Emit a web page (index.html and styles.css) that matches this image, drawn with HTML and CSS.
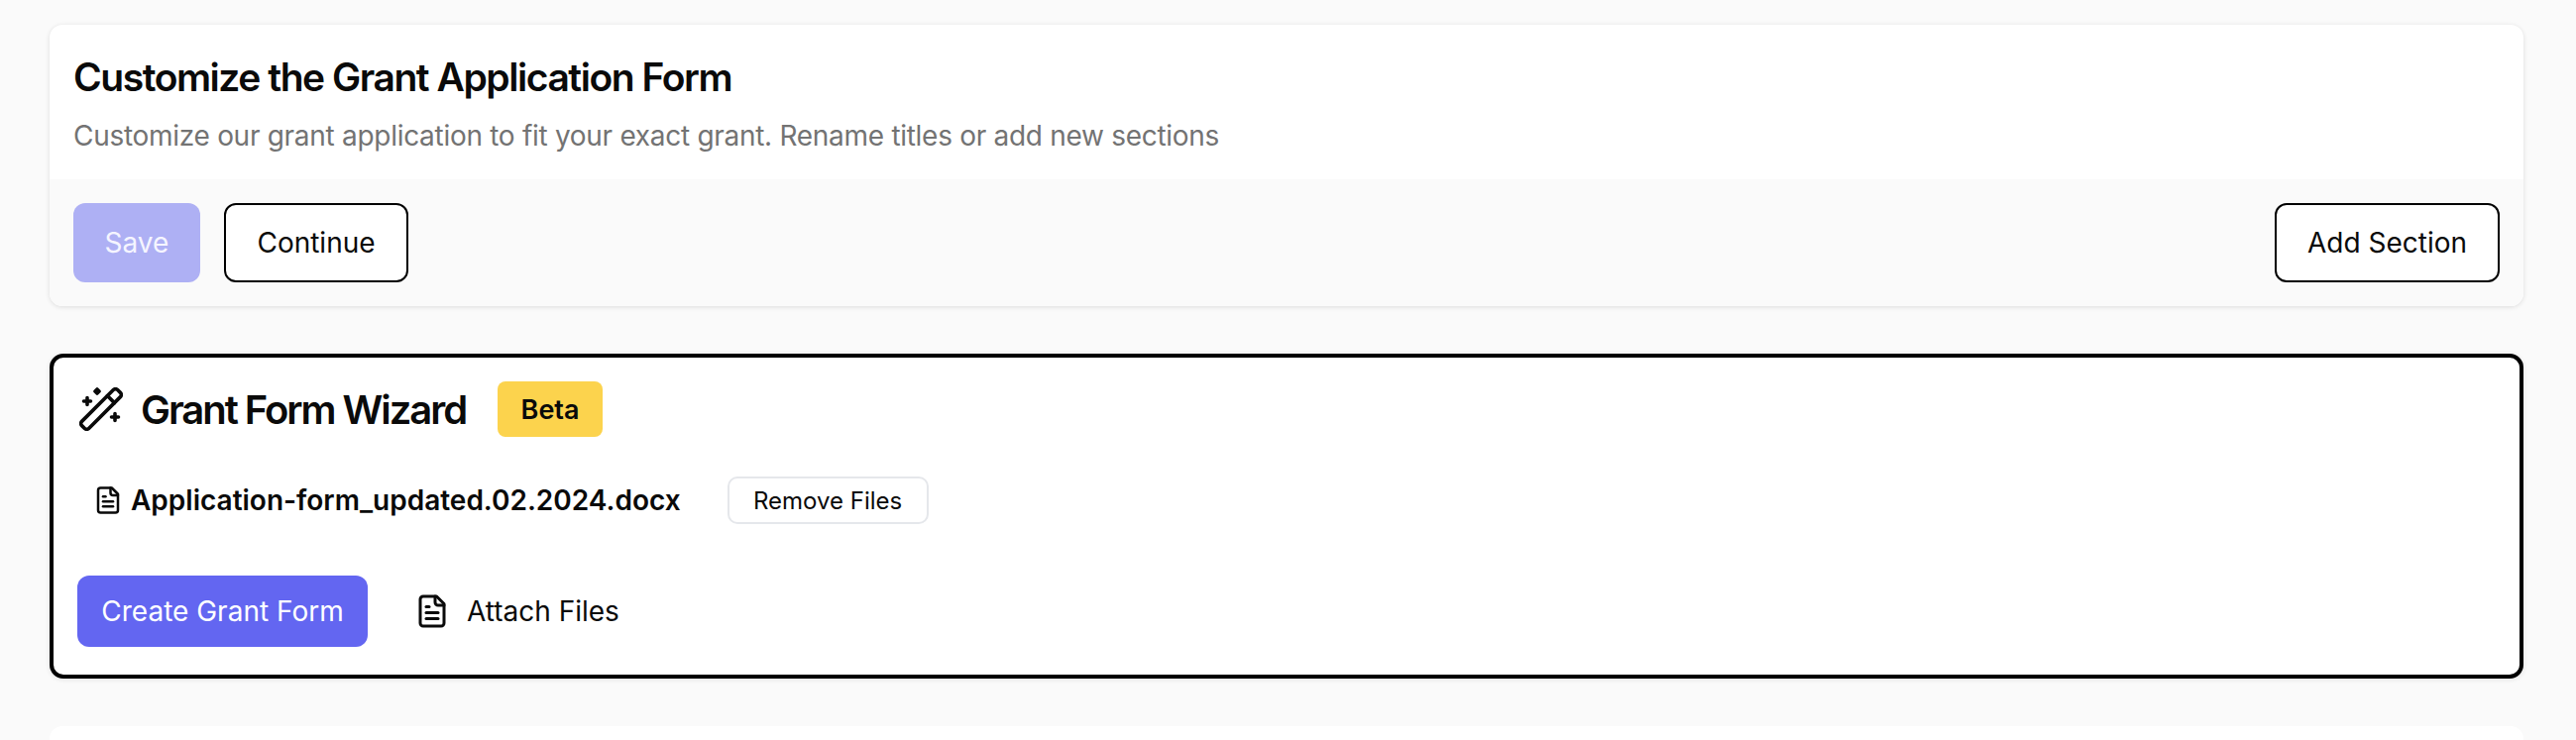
FILE: index.html
```html
<!DOCTYPE html>
<html lang="en">
<head>
    <meta charset="UTF-8">
    <meta name="viewport" content="width=device-width, initial-scale=1.0">
    <title>Customize the Grant Application Form</title>
    <link rel="stylesheet" href="styles.css">
</head>
<body>
    <section class="card">
        <div class="card-head">
            <h1 class="card-title">Customize the Grant Application Form</h1>
            <p class="card-text">Customize our grant application to fit your exact grant. Rename titles or add new sections</p>
        </div>
        <div class="card-foot">
            <div class="foot-left">
                <button class="btn btn-save">Save</button>
                <button class="btn btn-outline btn-continue">Continue</button>
            </div>
            <button class="btn btn-outline btn-add">Add Section</button>
        </div>
    </section>

    <section class="wizard">
        <div class="wizard-head">
            <svg class="wand-icon" viewBox="0 0 44 44" fill="none" stroke="currentColor" stroke-width="3.6" stroke-linecap="round" stroke-linejoin="round">
                <g transform="rotate(-45 22 22)">
                    <rect x="-3.5" y="17" width="51" height="10" rx="3"/>
                    <line x1="36" y1="17" x2="36" y2="27"/>
                </g>
                <path d="M8 10.5v7M4.5 14h7"/>
                <path d="M18 2l2 2-2 2-2-2z" fill="currentColor"/>
                <path d="M36 26.5v7M32.5 30h7"/>
            </svg>
            <h2 class="wizard-title">Grant Form Wizard</h2>
            <span class="badge">Beta</span>
        </div>
        <div class="file-row">
            <svg class="file-icon file-icon-sm" viewBox="0 0 24 24" fill="none" stroke="currentColor" stroke-width="2" stroke-linecap="round" stroke-linejoin="round">
                <path d="M15 2H6a2 2 0 0 0-2 2v16a2 2 0 0 0 2 2h12a2 2 0 0 0 2-2V7Z"/>
                <path d="M14 2v4a2 2 0 0 0 2 2h4"/>
                <path d="M10 9H8"/>
                <path d="M16 13H8"/>
                <path d="M16 17H8"/>
            </svg>
            <span class="file-name">Application-form_updated.02.2024.docx</span>
            <button class="btn-remove">Remove Files</button>
        </div>
        <div class="wizard-actions">
            <button class="btn-create">Create Grant Form</button>
            <button class="btn-attach">
                <svg class="file-icon" viewBox="0 0 24 24" fill="none" stroke="currentColor" stroke-width="2" stroke-linecap="round" stroke-linejoin="round">
                    <path d="M15 2H6a2 2 0 0 0-2 2v16a2 2 0 0 0 2 2h12a2 2 0 0 0 2-2V7Z"/>
                    <path d="M14 2v4a2 2 0 0 0 2 2h4"/>
                    <path d="M10 9H8"/>
                    <path d="M16 13H8"/>
                    <path d="M16 17H8"/>
                </svg>
                Attach Files
            </button>
        </div>
    </section>

    <section class="card card-next"></section>
</body>
</html>
```

FILE: styles.css
```css
html, body {
    height: 747px;
    overflow: hidden;
}
body {
    margin: 0;
    padding: 25px 53px 0 50px;
    box-sizing: border-box;
    background-color: #fafafa;
    color: #0a0a0a;
    font-family: "Inter", "Liberation Sans", sans-serif;
}
button {
    font-family: inherit;
    cursor: pointer;
}
.card {
    background-color: #fff;
    border-radius: 13px;
    box-shadow: 0 1px 5px rgba(0, 0, 0, 0.12);
    overflow: hidden;
}
.card-head {
    height: 156px;
    box-sizing: border-box;
    padding: 31px 24px 0 24px;
}
.card-title {
    margin: 0;
    font-size: 39px;
    line-height: 44px;
    font-weight: 600;
    letter-spacing: -1.45px;
}
.card-text {
    margin: 20px 0 0 0;
    font-size: 28px;
    line-height: 34px;
    letter-spacing: -0.29px;
    color: #737373;
}
.card-foot {
    display: flex;
    justify-content: space-between;
    padding: 24px;
    background-color: #fafafa;
}
.foot-left {
    display: flex;
    gap: 24px;
}
.btn {
    height: 80px;
    box-sizing: border-box;
    border-radius: 12px;
    font-size: 28px;
    font-weight: 400;
}
.btn-save {
    width: 128px;
    border: none;
    background-color: #aeb0f4;
    color: #f5f5ff;
}
.btn-outline {
    border: 2.5px solid #000;
    background-color: #fff;
    color: #0a0a0a;
}
.btn-continue {
    width: 186px;
}
.btn-add {
    width: 227px;
}
.wizard {
    margin-top: 48px;
    height: 328px;
    box-sizing: border-box;
    padding: 24px 24px 0 24px;
    background-color: #fff;
    border: 4px solid #000;
    border-radius: 14px;
    box-shadow: 0 1px 5px rgba(0, 0, 0, 0.1);
}
.wizard-head {
    display: flex;
    align-items: center;
    height: 56px;
}
.wand-icon {
    width: 44px;
    height: 44px;
    margin-left: 2px;
}
.wizard-title {
    margin: 0 32px 0 18px;
    font-size: 40px;
    font-weight: 600;
    letter-spacing: -2.05px;
}
.badge {
    display: flex;
    align-items: center;
    justify-content: center;
    width: 106px;
    height: 56px;
    border-radius: 8px;
    background-color: #fcd34d;
    font-size: 27px;
    font-weight: 600;
}
.file-row {
    display: flex;
    align-items: center;
    margin: 40px 0 0 16px;
    height: 48px;
}
.file-icon {
    width: 36px;
    height: 36px;
}
.file-icon-sm {
    width: 30px;
    height: 30px;
}
.file-name {
    margin: 0 47px 0 8px;
    font-size: 28px;
    font-weight: 600;
}
.btn-remove {
    width: 203px;
    height: 48px;
    border: 2.5px solid #e5e7eb;
    border-radius: 10px;
    background-color: #fff;
    color: #0a0a0a;
    font-size: 24px;
    font-weight: 400;
}
.wizard-actions {
    display: flex;
    align-items: center;
    margin-top: 52px;
}
.btn-create {
    width: 293px;
    height: 72px;
    border: none;
    border-radius: 12px;
    background-color: #6366f1;
    color: #fff;
    font-size: 28px;
    font-weight: 400;
}
.btn-attach {
    display: flex;
    align-items: center;
    gap: 17px;
    margin-left: 47px;
    padding: 0;
    border: none;
    background: none;
    color: #0a0a0a;
    font-size: 28px;
    font-weight: 400;
}
.card-next {
    margin-top: 48px;
    height: 14px;
    border-radius: 13px 13px 0 0;
    box-shadow: none;
}
```
